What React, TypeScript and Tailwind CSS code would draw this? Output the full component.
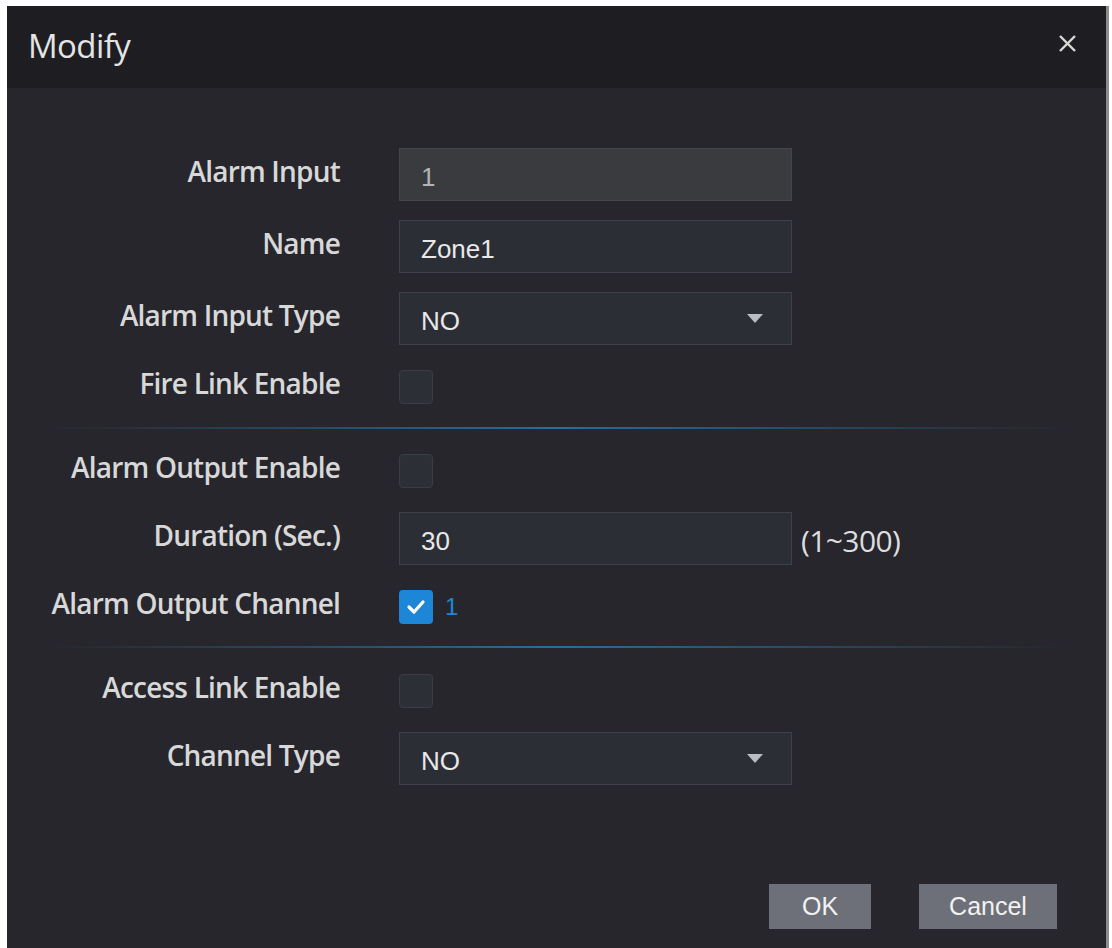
import React from "react";

const labelFont = { fontFamily: '"Open Sans", "Liberation Sans", sans-serif' };
const valueFont = { fontFamily: '"Liberation Sans", Arial, sans-serif' };

function Row({ label, children, className = "" }: { label: string; children: React.ReactNode; className?: string }) {
    return (
        <div className={`flex items-center h-[53px] ${className}`}>
            <div className="w-[333px] shrink-0 pb-[7px] text-right text-[28px] font-semibold text-[#d8d8d8] tracking-[-0.8px]" style={labelFont}>
                {label}
            </div>
            <div className="ml-[59px] flex items-center">{children}</div>
        </div>
    );
}

function TextBox({ value, disabled = false }: { value: string; disabled?: boolean }) {
    return (
        <div
            className={`w-[393px] h-[53px] flex items-center pl-[21px] pt-[6px] text-[26px] border ${
                disabled ? "bg-[#393b3f] border-[#434549] text-[#b4b4b4]" : "bg-[#2c2e36] border-[#3f4148] text-[#e8e8e8]"
            }`}
            style={valueFont}
        >
            {value}
        </div>
    );
}

function SelectBox({ value }: { value: string }) {
    return (
        <div
            className="w-[393px] h-[53px] flex items-center justify-between pl-[21px] pr-[28px] text-[26px] bg-[#2c2e36] border border-[#3f4148] text-[#e8e8e8]"
            style={valueFont}
        >
            <span className="pt-[6px]">{value}</span>
            <svg width="16" height="9" viewBox="0 0 16 9">
                <polygon points="0,0 16,0 8,9" fill="#b9bcc2" />
            </svg>
        </div>
    );
}

function Check({ checked = false }: { checked?: boolean }) {
    if (checked) {
        return (
            <div className="w-[34px] h-[34px] rounded-[4px] bg-[#1d86d6] flex items-center justify-center">
                <svg width="20" height="16" viewBox="0 0 20 16">
                    <polyline points="3,8 8,13 17,3" fill="none" stroke="#ffffff" strokeWidth="3.2" strokeLinecap="round" strokeLinejoin="round" />
                </svg>
            </div>
        );
    }
    return <div className="w-[34px] h-[34px] rounded-[4px] bg-[#2d2f36] border border-[#3b3d44]" />;
}

function Divider({ className = "" }: { className?: string }) {
    return <div className={`mx-[38px] h-[2px] bg-gradient-to-r from-transparent via-[#2a6d9b] to-transparent ${className}`} />;
}

export default function App() {
    return (
        <div className="w-[1112px] h-[948px] bg-white pt-[6px] pl-[7px] overflow-hidden">
            <div className="w-[1102px] h-[942px] bg-[#26262c] border-r-[3px] border-[#8d8d90] flex flex-col">
                <div className="h-[82px] bg-[#1e1e22] flex items-center justify-between pl-[21px] pr-[29px] shrink-0">
                    <h1 className="text-[33px] text-[#e4e4e4] tracking-[-0.6px] pb-[2px]" style={labelFont}>Modify</h1>
                    <svg width="19" height="19" viewBox="0 0 19 19" className="mb-[8px]">
                        <line x1="2" y1="2" x2="17" y2="17" stroke="#d8d8d8" strokeWidth="2.4" />
                        <line x1="17" y1="2" x2="2" y2="17" stroke="#d8d8d8" strokeWidth="2.4" />
                    </svg>
                </div>

                <div className="flex flex-col pt-[60px]">
                    <Row label="Alarm Input">
                        <TextBox value="1" disabled />
                    </Row>
                    <Row label="Name" className="mt-[19px]">
                        <TextBox value="Zone1" />
                    </Row>
                    <Row label="Alarm Input Type" className="mt-[19px]">
                        <SelectBox value="NO" />
                    </Row>
                    <Row label="Fire Link Enable" className="mt-[15px]">
                        <Check />
                    </Row>

                    <Divider className="mt-[14px]" />

                    <Row label="Alarm Output Enable" className="mt-[15px]">
                        <Check />
                    </Row>
                    <Row label="Duration (Sec.)" className="mt-[15px]">
                        <TextBox value="30" />
                        <span className="ml-[9px] pt-[4px] text-[30px] font-medium tracking-[-0.6px] text-[#dedede]" style={labelFont}>(1~300)</span>
                    </Row>
                    <Row label="Alarm Output Channel" className="mt-[15px]">
                        <Check checked />
                        <span className="ml-[12px] text-[24px] text-[#1d86d6]" style={valueFont}>1</span>
                    </Row>

                    <Divider className="mt-[13px]" />

                    <Row label="Access Link Enable" className="mt-[16px]">
                        <Check />
                    </Row>
                    <Row label="Channel Type" className="mt-[15px]">
                        <SelectBox value="NO" />
                    </Row>

                    <div className="flex justify-end gap-[48px] mt-[99px] pr-[49px]">
                        <button className="w-[102px] h-[45px] bg-[#6d7078] text-[#f2f2f2] text-[25px]" style={valueFont}>OK</button>
                        <button className="w-[138px] h-[45px] bg-[#6d7078] text-[#f2f2f2] text-[25px]" style={valueFont}>Cancel</button>
                    </div>
                </div>
            </div>
        </div>
    );
}
